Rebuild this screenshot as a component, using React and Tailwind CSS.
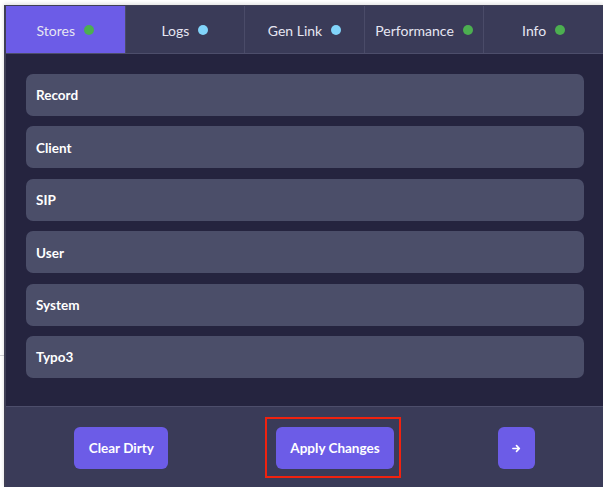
import React, { useState } from "react";

const tabs = [
  { name: "Stores", dot: "bg-[#4caf50]" },
  { name: "Logs", dot: "bg-[#81d4fa]" },
  { name: "Gen Link", dot: "bg-[#81d4fa]" },
  { name: "Performance", dot: "bg-[#4caf50]" },
  { name: "Info", dot: "bg-[#4caf50]" },
];

const stores = ["Record", "Client", "SIP", "User", "System", "Typo3"];

const App = () => {
  const [active, setActive] = useState("Stores");

  return (
    <div
      className="relative h-[487px] w-[603px] overflow-hidden bg-white pl-[4px] pt-[5px]"
      style={{ fontFamily: "Lato, 'Open Sans', sans-serif" }}
    >
      {/* thin line of the page behind the panel */}
      <div className="absolute left-0 top-[355px] h-px w-[6px] bg-[#d4d4d8]" />

      <div className="relative flex h-full flex-col border-l-2 border-t border-[#3f3f55] bg-[#25243f] shadow-[0_-1px_4px_rgba(0,0,0,0.15)]">
        {/* Tabs */}
        <div className="flex h-[48px] border-b border-[#4d4e6b] bg-[#3a3b58]">
          {tabs.map((t, i) => (
            <button
              key={t.name}
              onClick={() => setActive(t.name)}
              className={
                "flex flex-1 items-center justify-center gap-[9px] pt-px text-[14px] text-[#e6e6f2] " +
                (i < tabs.length - 1 ? "border-r border-[#4a4b68] " : "") +
                (active === t.name ? "bg-[#6c5ce7]" : "bg-[#3a3b58]")
              }
            >
              {t.name}
              <span className={"h-[10px] w-[10px] rounded-full " + t.dot} />
            </button>
          ))}
        </div>

        {/* Store list */}
        <div className="flex flex-1 flex-col gap-[10.4px] pl-[20px] pr-[19px] pt-[20px]">
          {stores.map((s) => (
            <div
              key={s}
              className="flex h-[42px] items-center rounded-[7px] bg-[#4b4e69] pl-[10px] pt-px text-[13.5px] font-bold text-white"
            >
              {s}
            </div>
          ))}
        </div>

        {/* Footer */}
        <div className="flex h-[81px] items-center justify-around border-t border-[#4d4e6b] bg-[#3a3b58] px-[20px]">
          <button className="mt-[2px] h-[42px] w-[94px] rounded-[6px] bg-[#6c5ce7] text-[13.5px] font-bold text-white">
            Clear Dirty
          </button>
          <div className="relative flex h-[61px] w-[136px] items-center justify-center">
            <div className="absolute inset-0 border-2 border-[#f0220f]" />
            <button className="relative ml-[4px] mt-[2px] h-[42px] w-[118px] rounded-[6px] bg-[#6c5ce7] text-[13.5px] font-bold text-white">
              Apply Changes
            </button>
          </div>
          <button className="mt-[2px] flex h-[42px] w-[37px] items-center justify-center rounded-[6px] bg-[#6c5ce7] text-white">
            <svg width="9" height="9" viewBox="0 0 10 10" fill="none">
              <path
                d="M1 5h7M5 1.8L8.2 5 5 8.2"
                stroke="white"
                strokeWidth="1.8"
                strokeLinecap="round"
                strokeLinejoin="round"
              />
            </svg>
          </button>
        </div>
      </div>
    </div>
  );
};

export default App;
